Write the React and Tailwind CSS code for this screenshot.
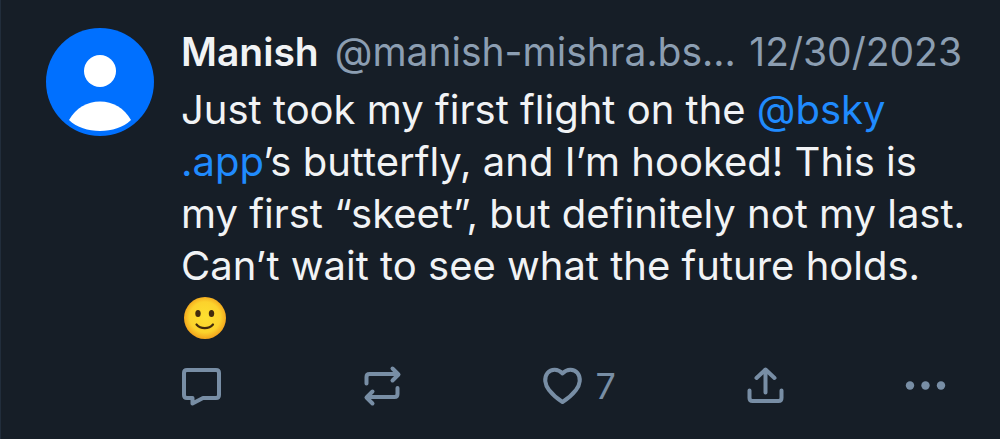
import { useState } from 'react';

const post = {
  name: 'Manish',
  handle: '@manish-mishra.bs...',
  date: '12/30/2023',
  likes: 7,
};

function Avatar() {
  return (<a href="#profile" aria-label="Manish" className="block size-27 shrink-0">
    <svg viewBox="0 0 108 108" className="size-full">
      <circle cx="54" cy="54" r="54" fill="#0070ff" />
      <circle cx="54" cy="43" r="16" fill="#fff" />
      <path d="M23 92C30 80 41 73.500 54 73.500S78 80 85 92C77 99.500 66 103 54 103S31 99.500 23 92Z" fill="#fff" />
    </svg>
  </a>)
}

function Smile() {
  return (<svg viewBox="0 0 44 44" role="img" aria-label="🙂" className="inline-block size-11 ml-0.5 my-1 align-top">
    <defs>
      <radialGradient id="face" cx="50%" cy="48%" r="52%">
        <stop offset="0" stopColor="#fde030" />
        <stop offset="0.7" stopColor="#fcd22c" />
        <stop offset="1" stopColor="#f2a21c" />
      </radialGradient>
    </defs>
    <circle cx="22" cy="22" r="21" fill="url(#face)" />
    <ellipse cx="15" cy="17.500" rx="2.700" ry="3.600" fill="#422b0d" />
    <ellipse cx="28.500" cy="17.500" rx="2.700" ry="3.600" fill="#422b0d" />
    <path d="M13.500 28.500C17.500 33.300 26 33.300 30 28.500" fill="none" stroke="#422b0d" strokeWidth="2.200" strokeLinecap="round" />
  </svg>)
}

function Icon({ children }) {
  return (<svg viewBox="0 0 44 44" fill="none" stroke="currentColor" strokeWidth="4" strokeLinecap="round" strokeLinejoin="round" className="size-11 shrink-0">
    {children}
  </svg>)
}

function Actions() {
  const [liked, setLiked] = useState(false);

  return (<div className="grid grid-cols-[180fr_180fr_202fr_160fr_58fr] items-center mt-5 mr-2 text-[#788ea5]">
    <button aria-label="Reply" className="justify-self-start">
      <Icon>
        <path d="M6 6H35Q38 6 38 9V31Q38 34 35 34H22L11.500 39.500V34H6Q3 34 3 31V9Q3 6 6 6Z" />
      </Icon>
    </button>
    <button aria-label="Repost" className="justify-self-start">
      <Icon>
        <path d="M5.500 19.500V13Q5.500 10 8.500 10H37M31.500 4.500L37.500 10.500L31.500 16.500M36.500 24V30Q36.500 33 33.500 33H6M11.500 27.500L5.500 33.500L11.500 39.500" />
      </Icon>
    </button>
    <button aria-label="Like" aria-pressed={liked} onClick={() => setLiked(!liked)} className="justify-self-start flex items-center">
      <Icon>
        <path d="M21.500 9.500C17 4.300 10 4.600 6.500 9C2.800 13.700 3.800 20.500 8 26C11.500 30.500 16 34.500 21.500 38C27 34.500 31.500 30.500 35 26C39.200 20.500 40.200 13.700 36.500 9C33 4.600 26 4.300 21.500 9.500Z" />
      </Icon>
      <span className="ml-2.5 text-[36px] leading-11">{post.likes + (liked ? 1 : 0)}</span>
    </button>
    <button aria-label="Share" className="justify-self-start">
      <Icon>
        <path d="M21.500 28.500V6M12.500 14L21.500 5.500L30.500 14M5.500 26.500V34Q5.500 37 8.500 37H34.500Q37.500 37 37.500 34V26.500" />
      </Icon>
    </button>
    <button aria-label="More" className="justify-self-start">
      <Icon>
        <g fill="currentColor" stroke="none">
          <circle cx="6" cy="21.500" r="4.200" />
          <circle cx="21.500" cy="21.500" r="4.200" />
          <circle cx="37" cy="21.500" r="4.200" />
        </g>
      </Icon>
    </button>
  </div>)
}

function App() {
  return (<main className="min-h-screen bg-[#161e27] border-l border-[#212d3b] font-['Inter',sans-serif]">
    <article className="flex gap-[27px] pl-[45px] pr-[30px] pt-7 pb-7">
      <Avatar />
      <div className="flex-1 min-w-0">
        <header className="flex items-center mr-2 text-[39px] leading-12 text-[#8c9eb2] whitespace-nowrap">
          <a href="#profile" className="font-semibold text-[#f1f3f5]">{post.name}</a>
          <a href="#profile" className="ml-4">{post.handle}</a>
          <a href="#post" className="ml-auto">{post.date}</a>
        </header>
        <p className="mt-2 text-[40px] leading-[52px] text-[#f1f3f5]">
          Just took my first flight on the <a href="#bsky" className="text-[#208bfe]">@bsky<br />.app</a>’s butterfly, and I’m hooked! This is<br />
          my first “skeet”, but definitely not my last.<br />
          Can’t wait to see what the future holds.<br />
          <Smile />
        </p>
        <Actions />
      </div>
    </article>
  </main>)
}

export default App;
